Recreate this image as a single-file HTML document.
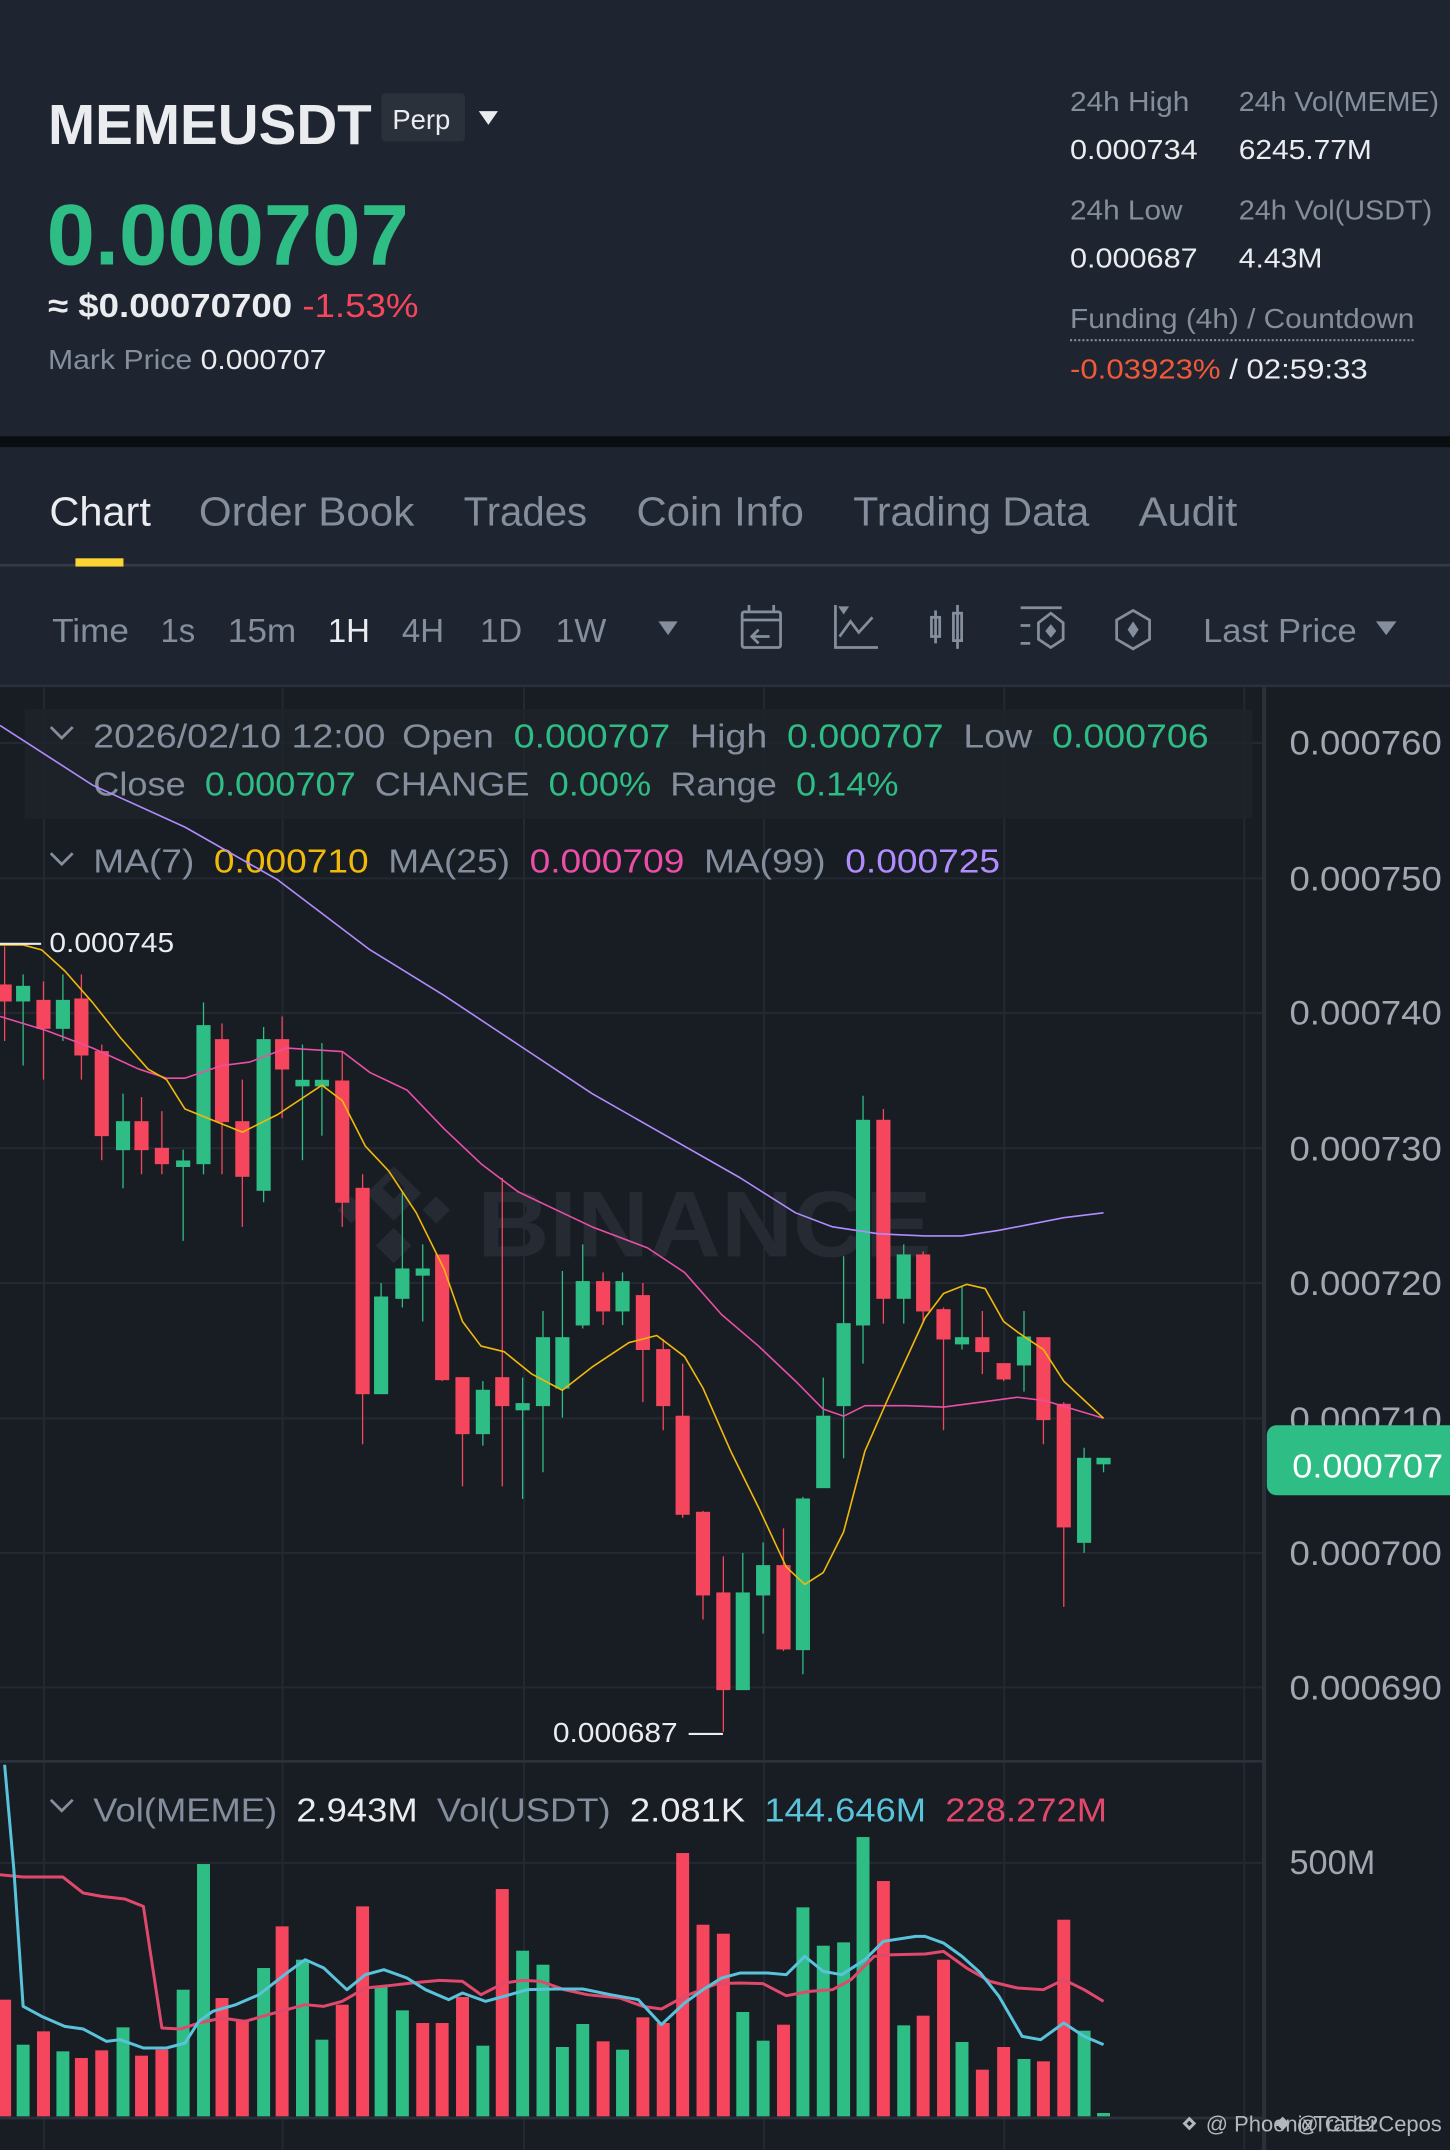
<!DOCTYPE html>
<html><head><meta charset="utf-8"><style>
html,body{margin:0;padding:0;background:#181c23;width:1450px;height:2150px;overflow:hidden}
svg{display:block}
text{font-family:"Liberation Sans",sans-serif}
</style></head><body>
<svg width="1450" height="2150" viewBox="0 0 1057 1567.3" preserveAspectRatio="none" xmlns="http://www.w3.org/2000/svg">
<!-- header -->
<rect x="0" y="0" width="1057" height="318" fill="#1f2530"/>
<rect x="0" y="318" width="1057" height="8" fill="#0b0e11"/>
<rect x="0" y="326" width="1057" height="174" fill="#1f2530"/>
<text x="35" y="105" font-size="41" font-weight="bold" fill="#eaecef" textLength="236" lengthAdjust="spacingAndGlyphs">MEMEUSDT</text>
<rect x="278" y="68" width="61" height="35" rx="3" fill="#2b313a"/>
<text x="286" y="94" font-size="20" fill="#eaecef">Perp</text>
<path d="M349 81 L363 81 L356 91 Z" fill="#eaecef"/>
<text x="34" y="193" font-size="63" font-weight="bold" fill="#2ebd85" textLength="264" lengthAdjust="spacingAndGlyphs">0.000707</text>
<text x="35" y="231" font-size="24" font-weight="bold" fill="#eaecef" textLength="270" lengthAdjust="spacingAndGlyphs">≈ $0.00070700 <tspan fill="#f6465d" font-weight="normal">-1.53%</tspan></text>
<text x="35" y="269" font-size="20" fill="#848e9c" textLength="203" lengthAdjust="spacingAndGlyphs">Mark Price <tspan fill="#eaecef">0.000707</tspan></text>
<g font-size="20">
<text x="780" y="81" fill="#848e9c" textLength="87" lengthAdjust="spacingAndGlyphs">24h High</text>
<text x="903" y="81" fill="#848e9c" textLength="146" lengthAdjust="spacingAndGlyphs">24h Vol(MEME)</text>
<text x="780" y="116" fill="#eaecef" textLength="93" lengthAdjust="spacingAndGlyphs">0.000734</text>
<text x="903" y="116" fill="#eaecef" textLength="97" lengthAdjust="spacingAndGlyphs">6245.77M</text>
<text x="780" y="160" fill="#848e9c" textLength="82" lengthAdjust="spacingAndGlyphs">24h Low</text>
<text x="903" y="160" fill="#848e9c" textLength="141" lengthAdjust="spacingAndGlyphs">24h Vol(USDT)</text>
<text x="780" y="195" fill="#eaecef" textLength="93" lengthAdjust="spacingAndGlyphs">0.000687</text>
<text x="903" y="195" fill="#eaecef" textLength="61" lengthAdjust="spacingAndGlyphs">4.43M</text>
<text x="780" y="239" fill="#848e9c" textLength="251" lengthAdjust="spacingAndGlyphs">Funding (4h) / Countdown</text>
<line x1="780" y1="248" x2="1031" y2="248" stroke="#848e9c" stroke-width="1.5" stroke-dasharray="1.5 1.5"/>
<text x="780" y="276" fill="#f0593a" textLength="217" lengthAdjust="spacingAndGlyphs">-0.03923%<tspan fill="#eaecef"> /  02:59:33</tspan></text>
</g>
<!-- tabs -->
<g font-size="29.5">
<text x="36" y="383" fill="#eaecef" textLength="74" lengthAdjust="spacingAndGlyphs">Chart</text>
<text x="145" y="383" fill="#848e9c" textLength="157" lengthAdjust="spacingAndGlyphs">Order Book</text>
<text x="338" y="383" fill="#848e9c" textLength="90" lengthAdjust="spacingAndGlyphs">Trades</text>
<text x="464" y="383" fill="#848e9c" textLength="122" lengthAdjust="spacingAndGlyphs">Coin Info</text>
<text x="622" y="383" fill="#848e9c" textLength="172" lengthAdjust="spacingAndGlyphs">Trading Data</text>
<text x="830" y="383" fill="#848e9c" textLength="72" lengthAdjust="spacingAndGlyphs">Audit</text>
</g>
<rect x="0" y="411" width="1057" height="2" fill="#343a45"/>
<rect x="55" y="407" width="35" height="6" fill="#fcd535"/>
<!-- toolbar -->
<g font-size="24" fill="#848e9c">
<text x="38" y="468" textLength="56" lengthAdjust="spacingAndGlyphs">Time</text>
<text x="117" y="468">1s</text>
<text x="166" y="468" textLength="50" lengthAdjust="spacingAndGlyphs">15m</text>
<text x="239" y="468" fill="#eaecef">1H</text>
<text x="293" y="468">4H</text>
<text x="350" y="468">1D</text>
<text x="405" y="468" textLength="37" lengthAdjust="spacingAndGlyphs">1W</text>
<text x="877" y="468" textLength="112" lengthAdjust="spacingAndGlyphs">Last Price</text>
</g>
<path d="M480 453 L494 453 L487 463 Z" fill="#848e9c"/>
<path d="M1003 453 L1018 453 L1010.5 463 Z" fill="#848e9c"/>
<g fill="none" stroke="#848e9c" stroke-width="2">
<rect x="541" y="446" width="28" height="26" rx="1.5"/><line x1="541" y1="452" x2="569" y2="452"/><line x1="546" y1="441" x2="546" y2="446"/><line x1="564" y1="441" x2="564" y2="446"/><path d="M561 464 L548 464 M553 459 L548 464 L553 469"/>
<path d="M609 441 L609 472 L640 472 M612 464 L620 453 L626 461 L636 450"/>
<path d="M611 442 L619 442 L615 448 Z" fill="#848e9c" stroke="none"/>
<rect x="679" y="450" width="6" height="14"/><line x1="682" y1="445" x2="682" y2="469"/><rect x="695" y="447" width="6" height="20"/><line x1="698" y1="441" x2="698" y2="473"/>
<path d="M744 443 L774 443 M744 456 L751 456 M744 469 L751 469 M766 447 L775 454 L775 466 L766 472 L757 466 L757 454 Z"/>
<path d="M826 445 L838 452 L838 466 L826 473 L814 466 L814 452 Z"/>
</g>
<path d="M766 455 L770 460 L766 465 L762 460 Z" fill="#848e9c"/>
<path d="M826 453 L830 459 L826 465 L822 459 Z" fill="#848e9c"/>
<rect x="0" y="499" width="1057" height="2" fill="#2b313a"/>
<!-- chart area -->
<rect x="0" y="501" width="1057" height="1067" fill="#181c23"/>
<g stroke="#232831" stroke-width="1.5">
<line x1="32" y1="501" x2="32" y2="1567"/><line x1="206" y1="501" x2="206" y2="1567"/><line x1="382" y1="501" x2="382" y2="1567"/><line x1="557" y1="501" x2="557" y2="1567"/><line x1="732" y1="501" x2="732" y2="1567"/><line x1="907" y1="501" x2="907" y2="1567"/>
<line x1="0" y1="541.6" x2="921" y2="541.6"/><line x1="0" y1="640.3" x2="921" y2="640.3"/><line x1="0" y1="738.5" x2="921" y2="738.5"/><line x1="0" y1="837" x2="921" y2="837"/><line x1="0" y1="935.3" x2="921" y2="935.3"/><line x1="0" y1="1034" x2="921" y2="1034"/><line x1="0" y1="1132" x2="921" y2="1132"/><line x1="0" y1="1230" x2="921" y2="1230"/><line x1="0" y1="1358" x2="921" y2="1358"/>
</g>
<!-- watermark -->
<g fill="#252a33">
<path d="M287 850 L307 870 L287 890 L267 870 Z M287 858 L279 866 L287 874 L295 866 Z" fill-rule="evenodd"/>
<path d="M256 872 L266 882 L256 892 L246 882 Z"/><path d="M318 872 L328 882 L318 892 L308 882 Z"/><path d="M287 895 L300 908 L287 921 L274 908 Z"/>
<text x="348" y="916" font-size="68" font-weight="bold" textLength="331" lengthAdjust="spacingAndGlyphs">BINANCE</text>
</g>
<!-- legend box -->
<rect x="18" y="517" width="895" height="80" fill="#1f242c" opacity="0.75"/>
<g font-size="24" fill="#848e9c">
<path d="M37 530 L45 538 L53 530" fill="none" stroke="#848e9c" stroke-width="2"/>
<text x="68" y="545" textLength="813" lengthAdjust="spacingAndGlyphs">2026/02/10 12:00  <tspan dx="4">Open</tspan> <tspan dx="6" fill="#2ebd85">0.000707</tspan> <tspan dx="6">High</tspan> <tspan dx="6" fill="#2ebd85">0.000707</tspan> <tspan dx="6">Low</tspan> <tspan dx="6" fill="#2ebd85">0.000706</tspan></text>
<text x="68" y="580" textLength="587" lengthAdjust="spacingAndGlyphs">Close <tspan dx="6" fill="#2ebd85">0.000707</tspan> <tspan dx="6">CHANGE</tspan> <tspan dx="6" fill="#2ebd85">0.00%</tspan> <tspan dx="6">Range</tspan> <tspan dx="6" fill="#2ebd85">0.14%</tspan></text>
<path d="M37 622 L45 630 L53 622" fill="none" stroke="#848e9c" stroke-width="2"/>
<text x="68" y="636" textLength="661" lengthAdjust="spacingAndGlyphs">MA(7) <tspan dx="6" fill="#f0b90b">0.000710</tspan> <tspan dx="6">MA(25)</tspan> <tspan dx="6" fill="#e94fa7">0.000709</tspan> <tspan dx="6">MA(99)</tspan> <tspan dx="6" fill="#b18cff">0.000725</tspan></text>
<path d="M37 1312 L45 1320 L53 1312" fill="none" stroke="#848e9c" stroke-width="2"/>
<text x="68" y="1328" textLength="739" lengthAdjust="spacingAndGlyphs">Vol(MEME) <tspan dx="6" fill="#eaecef">2.943M</tspan> <tspan dx="6">Vol(USDT)</tspan> <tspan dx="6" fill="#eaecef">2.081K</tspan> <tspan dx="6" fill="#5ac3dc">144.646M</tspan> <tspan dx="6" fill="#e0496c">228.272M</tspan></text>
</g>
<!-- candles (zoom coords) -->
<g transform="translate(0,495.6) scale(0.6743,0.5112)">
<g stroke-width="1.3" vector-effect="non-scaling-stroke">
<g fill="#f6465d" stroke="#f6465d">
<line x1="5" y1="380" x2="5" y2="515" vector-effect="non-scaling-stroke"/><rect x="-2" y="435" width="14" height="23"/>
<line x1="47" y1="430" x2="47" y2="570" vector-effect="non-scaling-stroke"/><rect x="40" y="457" width="14" height="40"/>
<line x1="88" y1="420" x2="88" y2="570" vector-effect="non-scaling-stroke"/><rect x="81" y="455" width="14" height="80"/>
<line x1="110" y1="520" x2="110" y2="685" vector-effect="non-scaling-stroke"/><rect x="103" y="530" width="14" height="120"/>
<line x1="153" y1="595" x2="153" y2="705" vector-effect="non-scaling-stroke"/><rect x="146" y="630" width="14" height="40"/>
<line x1="175" y1="615" x2="175" y2="705" vector-effect="non-scaling-stroke"/><rect x="168" y="668" width="14" height="22"/>
<line x1="240" y1="490" x2="240" y2="705" vector-effect="non-scaling-stroke"/><rect x="233" y="513" width="14" height="117"/>
<line x1="262" y1="570" x2="262" y2="780" vector-effect="non-scaling-stroke"/><rect x="255" y="630" width="14" height="78"/>
<line x1="305" y1="480" x2="305" y2="625" vector-effect="non-scaling-stroke"/><rect x="298" y="513" width="14" height="42"/>
<line x1="370" y1="530" x2="370" y2="780" vector-effect="non-scaling-stroke"/><rect x="363" y="572" width="14" height="173"/>
<line x1="392" y1="705" x2="392" y2="1090" vector-effect="non-scaling-stroke"/><rect x="385" y="725" width="14" height="293"/>
<line x1="478" y1="820" x2="478" y2="1000" vector-effect="non-scaling-stroke"/><rect x="471" y="820" width="14" height="178"/>
<line x1="500" y1="995" x2="500" y2="1150" vector-effect="non-scaling-stroke"/><rect x="493" y="995" width="14" height="80"/>
<line x1="543" y1="710" x2="543" y2="1150" vector-effect="non-scaling-stroke"/><rect x="536" y="995" width="14" height="40"/>
<line x1="652" y1="845" x2="652" y2="920" vector-effect="non-scaling-stroke"/><rect x="645" y="858" width="14" height="42"/>
<line x1="695" y1="860" x2="695" y2="1030" vector-effect="non-scaling-stroke"/><rect x="688" y="878" width="14" height="77"/>
<line x1="717" y1="940" x2="717" y2="1070" vector-effect="non-scaling-stroke"/><rect x="710" y="955" width="14" height="80"/>
<line x1="738" y1="975" x2="738" y2="1195" vector-effect="non-scaling-stroke"/><rect x="731" y="1050" width="14" height="140"/>
<line x1="760" y1="1185" x2="760" y2="1340" vector-effect="non-scaling-stroke"/><rect x="753" y="1187" width="14" height="118"/>
<line x1="782" y1="1250" x2="782" y2="1500" vector-effect="non-scaling-stroke"/><rect x="775" y="1302" width="14" height="138"/>
<line x1="847" y1="1210" x2="847" y2="1385" vector-effect="non-scaling-stroke"/><rect x="840" y="1263" width="14" height="119"/>
<line x1="955" y1="612" x2="955" y2="918" vector-effect="non-scaling-stroke"/><rect x="948" y="628" width="14" height="254"/>
<line x1="998" y1="815" x2="998" y2="915" vector-effect="non-scaling-stroke"/><rect x="991" y="820" width="14" height="80"/>
<line x1="1020" y1="895" x2="1020" y2="1070" vector-effect="non-scaling-stroke"/><rect x="1013" y="898" width="14" height="42"/>
<line x1="1062" y1="900" x2="1062" y2="990" vector-effect="non-scaling-stroke"/><rect x="1055" y="938" width="14" height="20"/>
<line x1="1085" y1="975" x2="1085" y2="1000" vector-effect="non-scaling-stroke"/><rect x="1078" y="975" width="14" height="22"/>
<line x1="1128" y1="938" x2="1128" y2="1090" vector-effect="non-scaling-stroke"/><rect x="1121" y="938" width="14" height="117"/>
<line x1="1150" y1="1030" x2="1150" y2="1322" vector-effect="non-scaling-stroke"/><rect x="1143" y="1033" width="14" height="175"/>
</g>
<g fill="#2ebd85" stroke="#2ebd85">
<line x1="25" y1="420" x2="25" y2="550" vector-effect="non-scaling-stroke"/><rect x="18" y="437" width="14" height="21"/>
<line x1="68" y1="420" x2="68" y2="515" vector-effect="non-scaling-stroke"/><rect x="61" y="457" width="14" height="40"/>
<line x1="133" y1="590" x2="133" y2="725" vector-effect="non-scaling-stroke"/><rect x="126" y="630" width="14" height="40"/>
<line x1="198" y1="670" x2="198" y2="800" vector-effect="non-scaling-stroke"/><rect x="191" y="686" width="14" height="8"/>
<line x1="220" y1="460" x2="220" y2="705" vector-effect="non-scaling-stroke"/><rect x="213" y="493" width="14" height="197"/>
<line x1="285" y1="495" x2="285" y2="745" vector-effect="non-scaling-stroke"/><rect x="278" y="513" width="14" height="215"/>
<line x1="327" y1="520" x2="327" y2="685" vector-effect="non-scaling-stroke"/><rect x="320" y="571" width="14" height="8"/>
<line x1="348" y1="518" x2="348" y2="650" vector-effect="non-scaling-stroke"/><rect x="341" y="571" width="14" height="8"/>
<line x1="412" y1="860" x2="412" y2="1018" vector-effect="non-scaling-stroke"/><rect x="405" y="880" width="14" height="138"/>
<line x1="435" y1="730" x2="435" y2="895" vector-effect="non-scaling-stroke"/><rect x="428" y="840" width="14" height="42"/>
<line x1="457" y1="805" x2="457" y2="915" vector-effect="non-scaling-stroke"/><rect x="450" y="840" width="14" height="9"/>
<line x1="522" y1="1000" x2="522" y2="1092" vector-effect="non-scaling-stroke"/><rect x="515" y="1013" width="14" height="62"/>
<line x1="565" y1="995" x2="565" y2="1168" vector-effect="non-scaling-stroke"/><rect x="558" y="1032" width="14" height="9"/>
<line x1="587" y1="900" x2="587" y2="1130" vector-effect="non-scaling-stroke"/><rect x="580" y="938" width="14" height="97"/>
<line x1="608" y1="843" x2="608" y2="1052" vector-effect="non-scaling-stroke"/><rect x="601" y="938" width="14" height="72"/>
<line x1="630" y1="805" x2="630" y2="925" vector-effect="non-scaling-stroke"/><rect x="623" y="858" width="14" height="62"/>
<line x1="673" y1="845" x2="673" y2="920" vector-effect="non-scaling-stroke"/><rect x="666" y="858" width="14" height="42"/>
<line x1="803" y1="1245" x2="803" y2="1440" vector-effect="non-scaling-stroke"/><rect x="796" y="1302" width="14" height="138"/>
<line x1="825" y1="1230" x2="825" y2="1360" vector-effect="non-scaling-stroke"/><rect x="818" y="1263" width="14" height="42"/>
<line x1="868" y1="1165" x2="868" y2="1418" vector-effect="non-scaling-stroke"/><rect x="861" y="1168" width="14" height="215"/>
<line x1="890" y1="995" x2="890" y2="1152" vector-effect="non-scaling-stroke"/><rect x="883" y="1050" width="14" height="102"/>
<line x1="912" y1="822" x2="912" y2="1110" vector-effect="non-scaling-stroke"/><rect x="905" y="918" width="14" height="117"/>
<line x1="933" y1="593" x2="933" y2="975" vector-effect="non-scaling-stroke"/><rect x="926" y="628" width="14" height="292"/>
<line x1="977" y1="805" x2="977" y2="918" vector-effect="non-scaling-stroke"/><rect x="970" y="820" width="14" height="62"/>
<line x1="1040" y1="865" x2="1040" y2="955" vector-effect="non-scaling-stroke"/><rect x="1033" y="938" width="14" height="9"/>
<line x1="1107" y1="900" x2="1107" y2="1015" vector-effect="non-scaling-stroke"/><rect x="1100" y="937" width="14" height="40"/>
<line x1="1172" y1="1095" x2="1172" y2="1245" vector-effect="non-scaling-stroke"/><rect x="1165" y="1110" width="14" height="120"/>
<line x1="1193" y1="1110" x2="1193" y2="1130" vector-effect="non-scaling-stroke"/><rect x="1186" y="1110" width="14" height="8"/>
</g>
</g>
<g fill="none" stroke-width="1.6" stroke-linejoin="round">
<polyline vector-effect="non-scaling-stroke" stroke="#b18cff" points="0,65 100,150 200,210 300,285 400,385 480,450 560,520 640,590 720,650 800,710 860,760 900,780 950,790 1000,793 1040,793 1080,785 1150,767 1193,760"/>
<polyline vector-effect="non-scaling-stroke" stroke="#e94fa7" points="0,480 50,500 100,525 150,555 180,568 200,568 240,550 270,545 310,525 370,530 400,560 440,585 480,640 520,690 560,730 600,755 640,780 700,810 740,845 780,905 820,950 860,1000 890,1040 912,1050 935,1035 980,1035 1020,1037 1060,1030 1100,1023 1130,1028 1160,1040 1193,1053"/>
<polyline vector-effect="non-scaling-stroke" stroke="#f0b90b" points="0,378 25,378 45,385 70,415 100,460 130,510 160,555 180,570 200,612 230,628 262,645 300,620 348,578 370,600 395,665 420,700 450,760 480,840 500,915 520,950 545,958 575,990 608,1013 640,980 680,945 710,935 740,965 760,1010 790,1100 820,1180 850,1265 870,1290 890,1273 912,1215 935,1100 960,1025 1000,910 1020,875 1045,862 1065,868 1085,915 1100,930 1128,955 1150,1000 1193,1053"/>
</g>
</g>
<!-- hi/lo labels -->
<line x1="0" y1="688" x2="30" y2="688" stroke="#eaecef" stroke-width="1.5"/>
<text x="36" y="694" font-size="20" fill="#eaecef" textLength="91" lengthAdjust="spacingAndGlyphs">0.000745</text>
<line x1="502" y1="1264" x2="527" y2="1264" stroke="#eaecef" stroke-width="1.5"/>
<text x="403" y="1270" font-size="20" fill="#eaecef" textLength="91" lengthAdjust="spacingAndGlyphs">0.000687</text>
<!-- volume -->
<rect x="0" y="1283" width="921" height="2" fill="#2b313a"/>
<g transform="translate(0,1282.8) scale(0.6743,0.24295)">
<g fill="#f6465d">
<rect x="-2" y="720" width="14" height="350"/><rect x="40" y="815" width="14" height="255"/><rect x="81" y="895" width="14" height="175"/><rect x="103" y="872" width="14" height="198"/><rect x="146" y="888" width="14" height="182"/><rect x="168" y="870" width="14" height="200"/><rect x="233" y="715" width="14" height="355"/><rect x="255" y="780" width="14" height="290"/><rect x="298" y="500" width="14" height="570"/><rect x="363" y="735" width="14" height="335"/><rect x="385" y="440" width="14" height="630"/><rect x="450" y="790" width="14" height="280"/><rect x="471" y="790" width="14" height="280"/><rect x="493" y="712" width="14" height="358"/><rect x="536" y="388" width="14" height="682"/><rect x="645" y="845" width="14" height="225"/><rect x="688" y="773" width="14" height="297"/><rect x="710" y="790" width="14" height="280"/><rect x="731" y="280" width="14" height="790"/><rect x="753" y="495" width="14" height="575"/><rect x="775" y="522" width="14" height="548"/><rect x="840" y="795" width="14" height="275"/><rect x="948" y="364" width="14" height="706"/><rect x="991" y="768" width="14" height="302"/><rect x="1013" y="600" width="14" height="470"/><rect x="1055" y="930" width="14" height="140"/><rect x="1078" y="862" width="14" height="208"/><rect x="1121" y="905" width="14" height="165"/><rect x="1143" y="480" width="14" height="590"/>
</g>
<g fill="#2ebd85">
<rect x="18" y="855" width="14" height="215"/><rect x="61" y="875" width="14" height="195"/><rect x="126" y="803" width="14" height="267"/><rect x="191" y="690" width="14" height="380"/><rect x="213" y="313" width="14" height="757"/><rect x="278" y="625" width="14" height="445"/><rect x="320" y="600" width="14" height="470"/><rect x="341" y="840" width="14" height="230"/><rect x="405" y="680" width="14" height="390"/><rect x="428" y="752" width="14" height="318"/><rect x="515" y="858" width="14" height="212"/><rect x="558" y="573" width="14" height="497"/><rect x="580" y="615" width="14" height="455"/><rect x="601" y="862" width="14" height="208"/><rect x="623" y="793" width="14" height="277"/><rect x="666" y="870" width="14" height="200"/><rect x="796" y="757" width="14" height="313"/><rect x="818" y="843" width="14" height="227"/><rect x="861" y="443" width="14" height="627"/><rect x="883" y="558" width="14" height="512"/><rect x="905" y="548" width="14" height="522"/><rect x="926" y="232" width="14" height="838"/><rect x="970" y="797" width="14" height="273"/><rect x="1033" y="847" width="14" height="223"/><rect x="1100" y="898" width="14" height="172"/><rect x="1165" y="813" width="14" height="257"/><rect x="1186" y="1060" width="14" height="10"/>
</g>
<g fill="none" stroke-width="3" stroke-linejoin="round">
<polyline vector-effect="non-scaling-stroke" stroke="#e0496c" points="0,345 25,352 68,352 90,400 110,410 135,418 155,440 175,805 195,808 215,790 240,775 265,785 290,765 310,750 330,735 350,740 370,725 395,685 420,678 445,670 475,662 500,665 520,705 545,670 565,662 585,665 610,690 635,705 670,715 695,740 715,748 740,710 775,672 800,670 825,672 850,708 875,695 900,690 920,660 945,590 965,585 1000,583 1020,575 1045,625 1070,665 1100,685 1128,690 1150,660 1172,690 1193,725"/>
<polyline vector-effect="non-scaling-stroke" stroke="#5ac3dc" points="5,15 15,330 25,740 45,770 70,800 90,808 115,845 130,840 155,865 180,865 200,850 215,785 230,755 255,735 280,705 310,640 330,600 350,625 375,690 395,645 415,630 440,655 460,690 485,720 500,700 525,725 545,710 570,690 600,688 630,688 660,705 690,720 715,795 740,730 760,690 780,655 800,640 830,640 850,645 870,590 890,635 910,645 935,600 955,545 990,530 1000,530 1020,550 1040,590 1060,640 1080,710 1105,830 1125,840 1150,790 1172,830 1193,855"/>
</g>
</g>
<rect x="0" y="1543" width="921" height="2" fill="#2b313a"/>
<!-- price axis -->
<rect x="920" y="501" width="3" height="1067" fill="#2b313a"/>
<g font-size="25" fill="#a1a7b1">
<text x="940" y="550" textLength="111" lengthAdjust="spacingAndGlyphs">0.000760</text>
<text x="940" y="649" textLength="111" lengthAdjust="spacingAndGlyphs">0.000750</text>
<text x="940" y="747" textLength="111" lengthAdjust="spacingAndGlyphs">0.000740</text>
<text x="940" y="846" textLength="111" lengthAdjust="spacingAndGlyphs">0.000730</text>
<text x="940" y="944" textLength="111" lengthAdjust="spacingAndGlyphs">0.000720</text>
<text x="940" y="1043" textLength="111" lengthAdjust="spacingAndGlyphs">0.000710</text>
<text x="940" y="1141" textLength="111" lengthAdjust="spacingAndGlyphs">0.000700</text>
<text x="940" y="1239" textLength="111" lengthAdjust="spacingAndGlyphs">0.000690</text>
<text x="940" y="1366">500M</text>
</g>
<rect x="923.5" y="1039" width="140" height="51" rx="7" fill="#2ebd85"/>
<text x="942" y="1077" font-size="24" fill="#ffffff" textLength="110" lengthAdjust="spacingAndGlyphs">0.000707</text>
<!-- bottom watermark -->
<g font-size="16" fill="#cfd3d8" opacity="0.85">
<path d="M867 1543 L872 1548 L867 1553 L862 1548 Z M867 1546 L869 1548 L867 1550 L865 1548 Z" fill-rule="evenodd"/>
<text x="879" y="1554">@ PhoenixTrader</text>
<path d="M935 1543 L940 1548 L935 1553 L930 1548 Z" />
<text x="945" y="1554">@ CT12Cepos</text>
</g>
</svg>
</body></html>
